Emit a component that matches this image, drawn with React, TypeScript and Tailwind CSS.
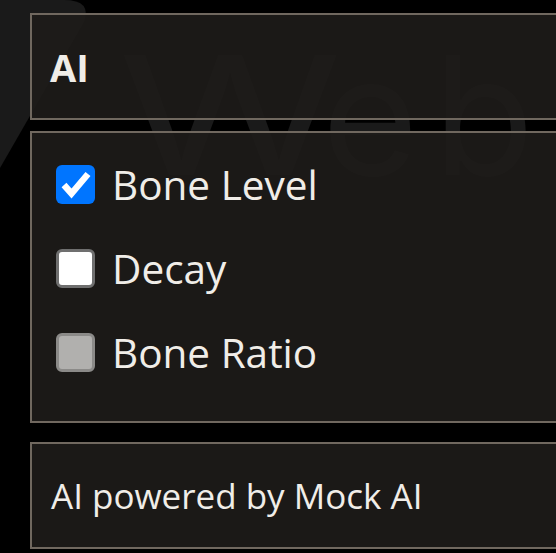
type Item = {
  label: string;
  state: "checked" | "unchecked" | "disabled";
};

const items: Item[] = [
  { label: "Bone Level", state: "checked" },
  { label: "Decay", state: "unchecked" },
  { label: "Bone Ratio", state: "disabled" },
];

function Box({ state }: { state: Item["state"] }) {
  if (state === "checked") {
    return (
      <div className="w-[39px] h-[39px] rounded-[6px] bg-[#0075ff] shrink-0">
        <svg width="39" height="39" viewBox="0 0 39 39">
          <polyline
            points="8,20 15.5,28.5 32,9"
            fill="none"
            stroke="white"
            strokeWidth="6.5"
            strokeLinejoin="miter"
          />
        </svg>
      </div>
    );
  }
  if (state === "unchecked") {
    return (
      <div className="w-[39px] h-[39px] rounded-[6px] bg-white border-[3px] border-[#6f6f6f] shrink-0" />
    );
  }
  return (
    <div className="w-[39px] h-[39px] rounded-[6px] bg-[#b1b0ae] border-[3px] border-[#8b8a88] shrink-0" />
  );
}

export default function App() {
  return (
    <div
      className="relative w-full h-[553px] overflow-hidden bg-black text-[#f0ede8]"
      style={{ fontFamily: '"Open Sans", "Noto Sans", sans-serif' }}
    >
      {/* faint logo watermark behind the panels */}
      <svg className="absolute left-0 top-0" width="120" height="200" viewBox="0 0 120 200">
        <path d="M0 0 H64 Q92 0 84 22 L0 168 Z" fill="#1a1a1a" />
      </svg>
      <div
        className="absolute left-0 top-[33px] w-full h-[170px] text-[165px] leading-none font-normal text-[#1a1a1a] whitespace-nowrap select-none"
        style={{ fontFamily: "Inter, sans-serif" }}
      >
        <span className="absolute left-[118px] top-0 inline-block scale-x-[1.38] origin-left">W</span>
        <span className="absolute left-[322px] top-0">e</span>
        <span className="absolute left-[433px] top-0">b</span>
      </div>

      <div className="relative flex flex-col pl-[30px] pt-[13px] w-[700px]">
        <div className="h-[107px] border-2 border-[#70685f] bg-[#1e1c1a]/90 flex items-center pl-[18px]">
          <span className="text-[38px] font-bold leading-none">AI</span>
        </div>

        <div className="mt-[11px] border-2 border-[#70685f] bg-[#1e1c1a]/90 flex flex-col gap-[45px] pt-[32px] pb-[49px] pl-[24px]">
          {items.map((item) => (
            <div key={item.label} className="flex items-center gap-[17px] h-[39px]">
              <Box state={item.state} />
              <span className="text-[40.5px] leading-none translate-y-[1px]">{item.label}</span>
            </div>
          ))}
        </div>

        <div className="mt-[19px] h-[107px] border-2 border-[#70685f] bg-[#1e1c1a]/90 flex items-center pl-[19px]">
          <span className="text-[35px] leading-none">AI powered by Mock AI</span>
        </div>
      </div>
    </div>
  );
}
